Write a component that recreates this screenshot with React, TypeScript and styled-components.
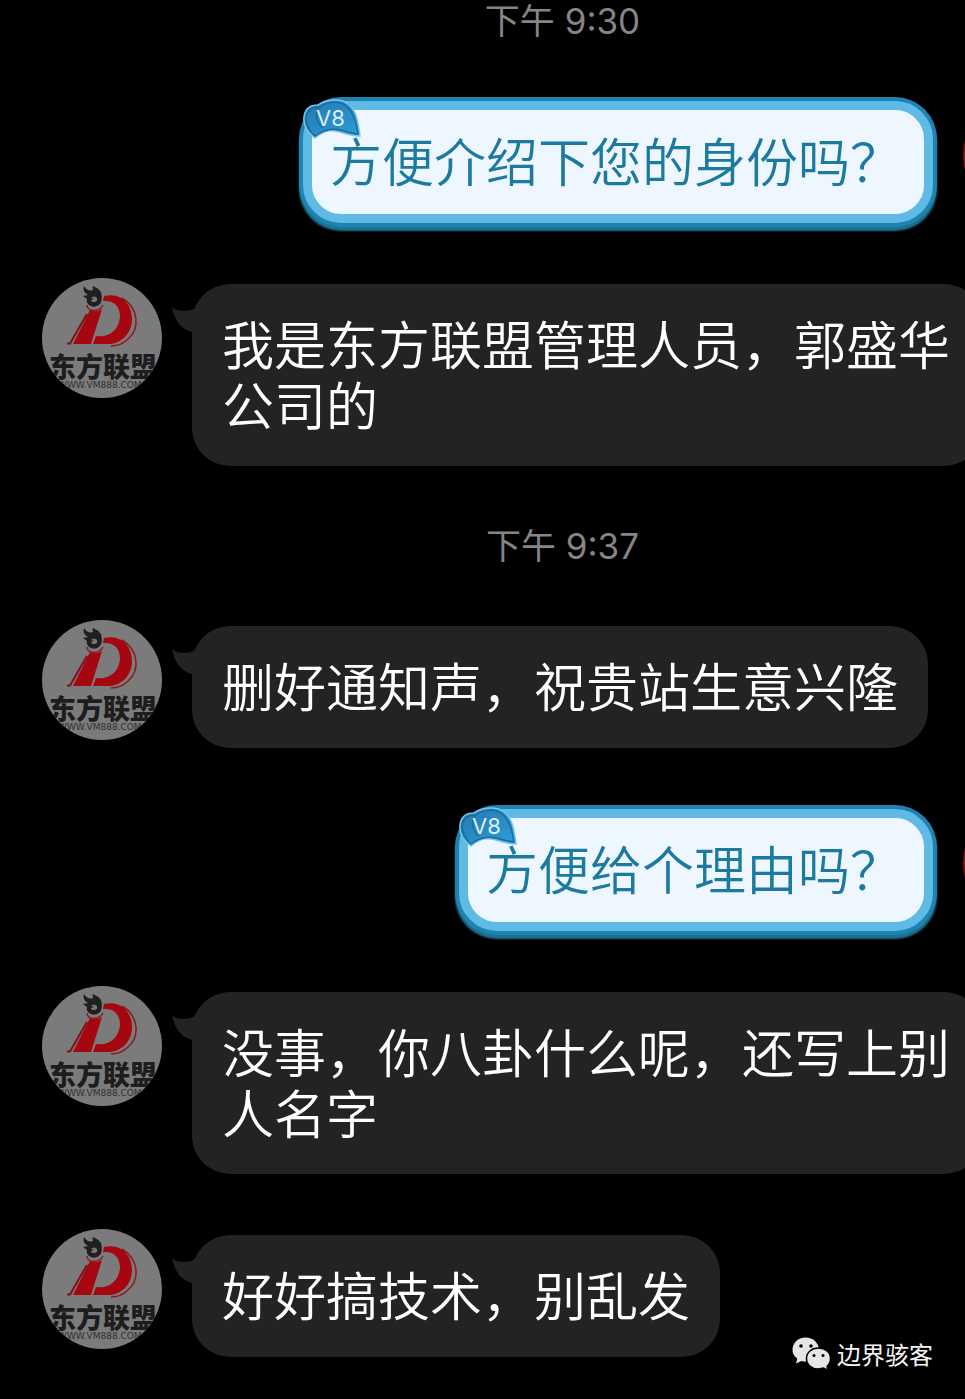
import React from 'react';
import styled, { createGlobalStyle } from 'styled-components';

const GlobalStyle = createGlobalStyle`
  *, *::before, *::after { box-sizing: border-box; }
  html, body { margin: 0; background: #000; }
  body {
    font-family: 'Noto Sans CJK SC', sans-serif;
    color: #fff;
  }
`;

const Screen = styled.main`
  position: relative;
  min-height: 100vh;
  overflow: hidden;
  background: #000;
`;

/* The thread is wider than the window and runs off its right side. */
const Thread = styled.div`
  display: flex;
  flex-direction: column;
  gap: 55px;
  width: calc(100% + 160px);
  padding: 0 42px 41px;
`;

const Stamp = styled.time`
  align-self: center;
  padding-top: 6px;
  font-family: Inter, 'Noto Sans CJK SC', sans-serif;
  font-size: 35px;
  font-weight: 400;
  line-height: 38px;
  color: #858589;

  &:first-child { padding-top: 2px; }
`;

const Row = styled.article<{ $own?: boolean }>`
  display: flex;
  flex-direction: ${(p) => (p.$own ? 'row-reverse' : 'row')};
  align-items: flex-start;
  gap: 30px;
`;

const Portrait = styled.svg`
  flex: none;
  width: 120px;
  height: 120px;
  border-radius: 50%;
`;

const OwnPortrait = styled.div`
  flex: none;
  width: 120px;
  height: 120px;
  border-radius: 50%;
  background: #7c1217;
`;

const Bubble = styled.div`
  position: relative;
  min-height: 122px;
  max-width: 790px;
  margin-top: 6px;
  padding: 28px 30px 32px;
  border-radius: 38px;
  background: #232323;
`;

const OwnBubble = styled.div`
  position: relative;
  min-height: 122px;
  margin-top: 6px;
  padding: 19px 22px 22px 18px;
  border: 9px solid #5fbae6;
  border-radius: 38px;
  background: #eef7ff;
  color: #1b7a9e;
  box-shadow: 0 0 0 4px #1f83b2, 0 4px 2px 4px #1d7390;
`;

const Message = styled.p`
  margin: 0;
  font-size: 52px;
  font-weight: 350;
  line-height: 61px;
`;

const TailShape = styled.svg`
  position: absolute;
  left: -20px;
  top: 22px;
`;

const Badge = styled.svg`
  position: absolute;
  left: -10px;
  top: -12px;
`;

const Watermark = styled.footer`
  position: absolute;
  right: 32px;
  bottom: 27px;
  display: flex;
  align-items: center;
  gap: 6px;
  font-size: 24px;
  line-height: 36px;
  color: #f4f4f4;
`;

const Avatar = () => (
  <Portrait viewBox="0 0 120 120" role="img" aria-label="东方联盟">
    <rect width="120" height="120" fill="#7b7b7b" />
    <path d="M62 18C80 14 90 27 90 41C90 55 80 65 68 66L51 66L54 58C68 60 77 51 78 39C78 28 72 22 61 23Z" fill="#a5060f" />
    <path d="M80 20C97 30 98 51 86 61Q79 68 69 68" fill="none" stroke="#8c1a20" strokeWidth="1.500" />
    <path d="M48 32Q54 35 60 31L49 66H31Z" fill="#a5060f" />
    <path d="M45 36L28 65.500H25" fill="none" stroke="#7e1218" strokeWidth="2" />
    <path d="M45 27Q45 31 50 32.500Q58 33 61 27" fill="none" stroke="#8c1a20" strokeWidth="1.500" />
    <path d="M42 8Q46 14 51 12Q50 9 51 8Q56 10 59 14Q61 22 58 26Q53 31 47 27Q44 24 45 21L41 18L46 17Q40 14 42 8Z" fill="#1f1f1f" />
    <path d="M49 20Q52 17 55 20Q56 24 52 24Q49 24 49 22L52 21Z" fill="#777" />
    <text x="7" y="99" fontFamily="'Noto Sans CJK SC', sans-serif" fontSize="27" fontWeight="900" fill="#1d1d1d">东方联盟</text>
    <text x="16" y="110" fontFamily="'DejaVu Sans', sans-serif" fontSize="9" fill="#303030">WWW.VM888.COM</text>
  </Portrait>
);

const Tail = () => (
  <TailShape width="32" height="28" viewBox="0 0 32 28" aria-hidden="true">
    <path d="M0 1Q4 5 12 5Q19 5 25 1L30 4V26H20Q4 22 0 1Z" fill="#232323" />
  </TailShape>
);

const LevelBadge = () => (
  <Badge width="62" height="44" viewBox="0 0 62 44" role="img" aria-label="V8">
    <defs>
      <linearGradient id="leaf" x1="0" y1="0" x2="1" y2="1">
        <stop offset="0" stopColor="#2677b0" />
        <stop offset="1" stopColor="#2f9ed6" />
      </linearGradient>
    </defs>
    <path
      d="M13 40C5 34 1 27 2 19C3 10 8 7 16 7C25 1 39 0 46 6C54 12 56 22 58 38C50 38 44 36 38 34C31 32 24 31 13 40Z"
      fill="url(#leaf)" stroke="#79c6ec" strokeWidth="1.500"
    />
    <path d="M13 38C7 33 4 26 4 20C5 12 10 9 17 9C12 17 15 25 21 30M18 9C26 3 38 3 44 8C51 13 54 23 56 36C49 35 43 33 38 32C30 30 22 31 13 38" fill="none" stroke="#176d9f" strokeWidth="1.500" />
    <text x="14" y="28" fontFamily="Inter, sans-serif" fontSize="22" fill="#d8eefa">V8</text>
  </Badge>
);

const ChatLogo = () => (
  <svg width="39" height="34" viewBox="0 0 39 34" aria-hidden="true">
    <path d="M13.500 0.500C6 0.500 .5 6 .5 12.800C.5 16.500 2.300 19.500 5.300 21.600L4 26.500L9.300 24C20 26.500 27 20 27 12.800C27 6 21 0.500 13.500 0.500Z" fill="#e6e6e6" />
    <path d="M26.500 11C19.500 11 14.500 15.500 14.500 21.500C14.500 27.500 19.500 32 26.500 32L31.500 31L36 33.500L35 29.300C37.500 27.300 38.500 24.500 38.500 21.500C38.500 15.500 33.500 11 26.500 11Z" fill="#e6e6e6" stroke="#000" strokeWidth="1.500" />
    <g fill="#000">
      <circle cx="9" cy="9" r="1.800" />
      <circle cx="19" cy="9" r="1.800" />
      <circle cx="22" cy="18.500" r="1.500" />
      <circle cx="31" cy="18.500" r="1.500" />
    </g>
  </svg>
);

const Incoming = ({ text }: { text: string }) => (
  <Row>
    <Avatar />
    <Bubble>
      <Tail />
      <Message>{text}</Message>
    </Bubble>
  </Row>
);

const Outgoing = ({ text }: { text: string }) => (
  <Row $own>
    <OwnPortrait />
    <OwnBubble>
      <Message>{text}</Message>
      <LevelBadge />
    </OwnBubble>
  </Row>
);

export default function App() {
  return (
    <>
      <GlobalStyle />
      <Screen>
        <Thread>
          <Stamp>下午 9:30</Stamp>
          <Outgoing text="方便介绍下您的身份吗？" />
          <Incoming text="我是东方联盟管理人员，郭盛华公司的" />
          <Stamp>下午 9:37</Stamp>
          <Incoming text="删好通知声，祝贵站生意兴隆" />
          <Outgoing text="方便给个理由吗？" />
          <Incoming text="没事，你八卦什么呢，还写上别人名字" />
          <Incoming text="好好搞技术，别乱发" />
        </Thread>
        <Watermark>
          <ChatLogo />
          <span>边界骇客</span>
        </Watermark>
      </Screen>
    </>
  );
}
